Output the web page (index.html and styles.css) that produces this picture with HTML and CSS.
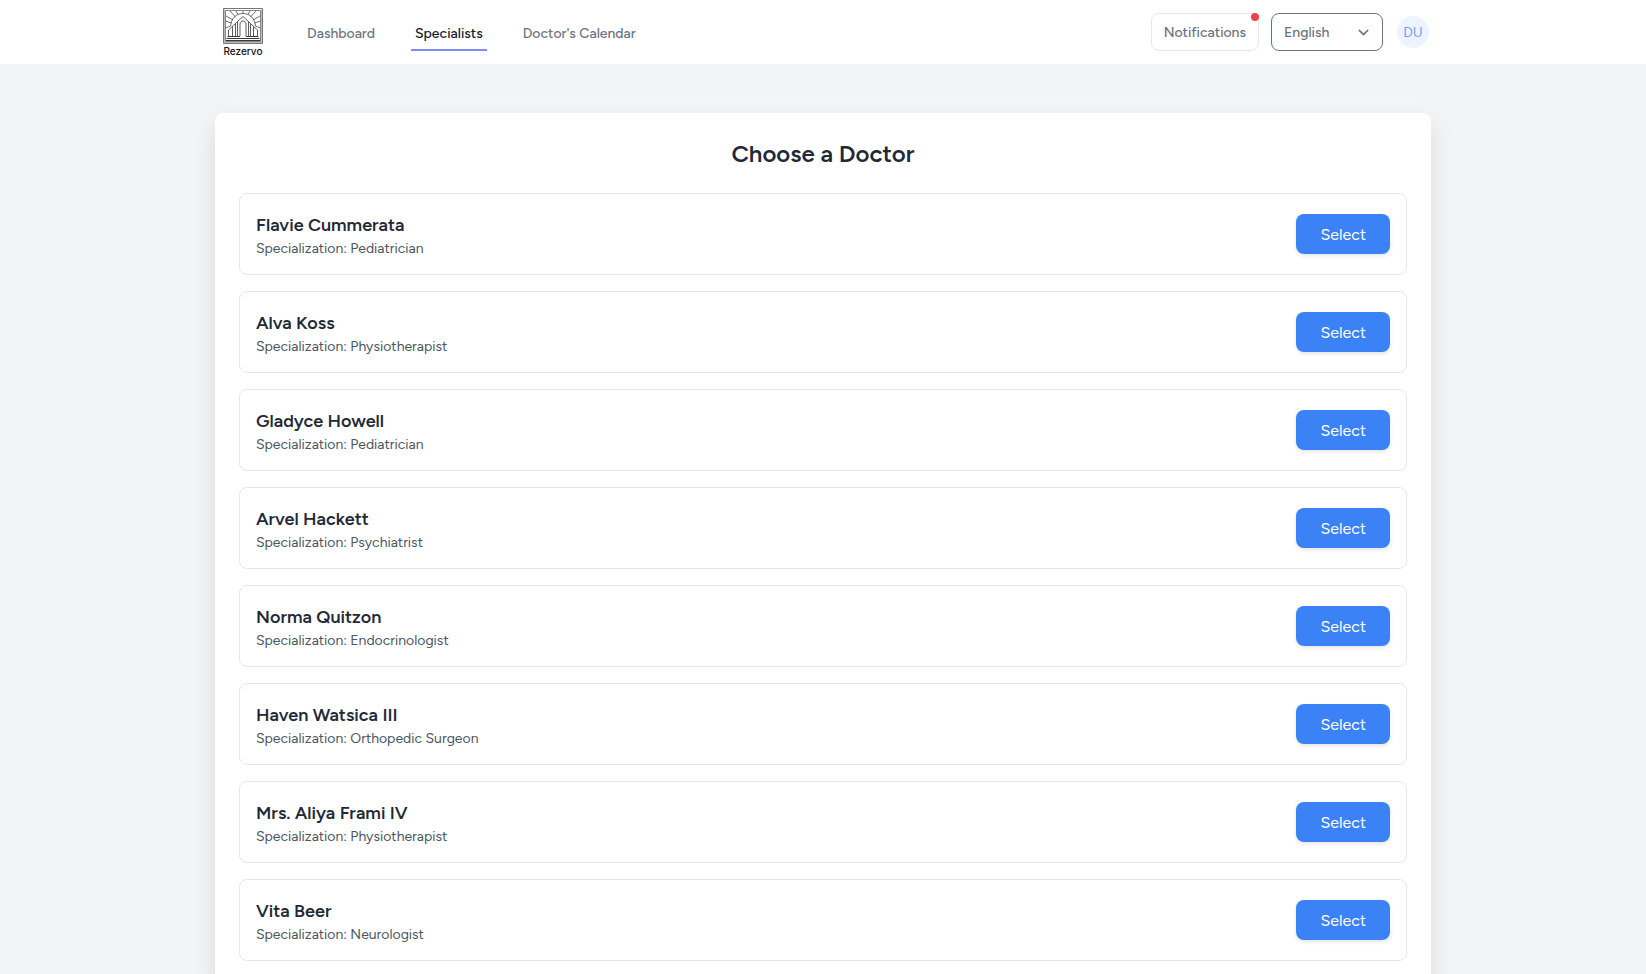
FILE: index.html
```html
<!DOCTYPE html>
<html lang="en">
<head>
<meta charset="utf-8">
<meta name="viewport" content="width=device-width, initial-scale=1">
<title>Rezervo - Specialists</title>
<link rel="stylesheet" href="styles.css">
</head>
<body>
<header class="topbar">
  <div class="container topbar-inner">
    <a class="logo" href="#" aria-label="Rezervo home">
      <svg class="logo-svg" viewBox="0 0 40 48" fill="none" stroke="#333">
        <path stroke="#777" d="M.5.5h39v35H.5z"/>
        <path stroke="#bbb" d="M1 34.500h38M1.500 1.500v33M38.500 1.500v33"/>
        <path stroke="#555" stroke-width=".7" d="M2.500 2.500h35v31h-35z"/>
        <path stroke-width=".7" d="M7.500 18C8.500 10 13 5.500 20 5.500S31.500 10 32.500 18"/>
        <path stroke-width=".8" d="M5.500 28v-6L20 8.500 34.500 22v6M9.500 28v-9.500M12.500 28V16M14.500 28V14M17 28V16c0-4 6-4 6 0v12M25.500 28V14M27.500 28V16M30.500 28v-9.500"/>
        <path stroke-width=".7" d="M2.500 20l5-2M37.500 20l-5-2M2.500 13l6 2M37.500 13l-6 2M3 8l7 4M37 8l-7 4M7 3l5.500 6M33 3l-5.500 6M13 3l2 3.500M27 3l-2 3.500M20 3v2.500"/>
        <path stroke="#222" d="M4.500 28.500h12.500M23 28.500h12.500M3.500 30.500h33M3 32.500h34" stroke-width=".9"/>
        <text class="logo-text" x="20" y="47" text-anchor="middle">Rezervo</text>
      </svg>
    </a>
    <nav class="nav">
      <a class="nav-link" href="#">Dashboard</a>
      <a class="nav-link active" href="#" aria-current="page">Specialists</a>
      <a class="nav-link" href="#">Doctor's Calendar</a>
    </nav>
    <div class="tools">
      <button class="notify" type="button">Notifications<span class="dot"></span></button>
      <div class="lang">
        <select class="lang-select" aria-label="Language"><option>English</option></select>
        <svg class="chevron" viewBox="0 0 20 20" fill="none" stroke="#6b7280" stroke-width="1.5" stroke-linecap="round" stroke-linejoin="round"><path d="M6 8l4 4 4-4"/></svg>
      </div>
      <button class="avatar" type="button">DU</button>
    </div>
  </div>
</header>
<main class="container main">
  <section class="panel">
    <h1 class="title">Choose a Doctor</h1>
    <ul class="doctors">
      <li class="doctor"><div class="info"><h2 class="name">Flavie Cummerata</h2><p class="spec">Specialization: Pediatrician</p></div><button class="select" type="button">Select</button></li>
      <li class="doctor"><div class="info"><h2 class="name">Alva Koss</h2><p class="spec">Specialization: Physiotherapist</p></div><button class="select" type="button">Select</button></li>
      <li class="doctor"><div class="info"><h2 class="name">Gladyce Howell</h2><p class="spec">Specialization: Pediatrician</p></div><button class="select" type="button">Select</button></li>
      <li class="doctor"><div class="info"><h2 class="name">Arvel Hackett</h2><p class="spec">Specialization: Psychiatrist</p></div><button class="select" type="button">Select</button></li>
      <li class="doctor"><div class="info"><h2 class="name">Norma Quitzon</h2><p class="spec">Specialization: Endocrinologist</p></div><button class="select" type="button">Select</button></li>
      <li class="doctor"><div class="info"><h2 class="name">Haven Watsica III</h2><p class="spec">Specialization: Orthopedic Surgeon</p></div><button class="select" type="button">Select</button></li>
      <li class="doctor"><div class="info"><h2 class="name">Mrs. Aliya Frami IV</h2><p class="spec">Specialization: Physiotherapist</p></div><button class="select" type="button">Select</button></li>
      <li class="doctor"><div class="info"><h2 class="name">Vita Beer</h2><p class="spec">Specialization: Neurologist</p></div><button class="select" type="button">Select</button></li>
    </ul>
  </section>
</main>
</body>
</html>
```
FILE: styles.css
```css
* { box-sizing: border-box; }
body {
  margin: 0;
  background: #f3f4f6;
  color: #1f2937;
  font-family: Figtree, Lato, "Open Sans", sans-serif;
  font-size: 16px;
  line-height: 24px;
}
button, select { font: inherit; cursor: pointer; }
.container { max-width: 1280px; margin: 0 auto; padding: 0 32px; }
.topbar { background: #fff; border-bottom: 1px solid #f3f4f6; }
.topbar-inner { display: flex; align-items: center; height: 64px; }
.logo { display: flex; justify-content: center; width: 56px; }
.logo-svg { width: 40px; height: 48px; }
.logo-text { font: 500 10px Inter, "Liberation Sans", sans-serif; fill: #111; stroke: none; }
.nav { display: flex; align-items: center; gap: 32px; margin-left: 32px; }
.nav-link {
  padding: 11px 4px 5px;
  border-bottom: 2px solid transparent;
  color: #6b7280;
  font-size: 14px;
  font-weight: 500;
  line-height: 20px;
  text-decoration: none;
}
.nav-link.active { color: #111827; border-color: #818cf8; }
.tools { display: flex; align-items: center; gap: 12px; margin-left: auto; padding-right: 2px; }
.notify {
  position: relative;
  height: 38px;
  padding: 2px 12px 0;
  border: 1px solid #e5e7eb;
  border-radius: 8px;
  background: #fff;
  color: #6b7280;
  font-size: 14px;
  font-weight: 500;
}
.dot { position: absolute; top: -1px; right: -1px; width: 8px; height: 8px; border-radius: 50%; background: #ef4444; }
.lang { position: relative; }
.lang-select {
  display: block;
  appearance: none;
  width: 112px;
  height: 38px;
  padding: 2px 40px 0 12px;
  border: 1px solid #6b7280;
  border-radius: 8px;
  background: #fff;
  color: #6b7280;
  font-size: 14px;
  font-weight: 500;
}
.chevron { position: absolute; top: 9px; right: 9px; width: 21px; height: 21px; pointer-events: none; }
.avatar {
  width: 32px;
  height: 32px;
  margin-left: 2px;
  padding: 2px 0 0;
  border: 0;
  border-radius: 50%;
  background: #ebf4ff;
  color: #7f9cf5;
  font-size: 14px;
}
.main { padding-top: 48px; padding-bottom: 48px; }
.panel {
  padding: 24px;
  border-radius: 8px;
  background: #fff;
  box-shadow: 0 10px 25px rgb(0 0 0 / 10%);
}
.title { margin: 0 0 23px; padding-top: 1px; font-size: 24px; font-weight: 600; line-height: 32px; text-align: center; }
.doctors { display: grid; gap: 16px; margin: 0; padding: 0; list-style: none; }
.doctor {
  display: flex;
  align-items: center;
  justify-content: space-between;
  padding: 15px 16px;
  border: 1px solid #e5e7eb;
  border-radius: 8px;
}
.info { padding-top: 2px; }
.name { margin: 0; font-size: 18px; font-weight: 600; line-height: 28px; }
.spec { margin: 0; color: #4b5563; font-size: 14px; line-height: 20px; }
.select {
  padding: 9px 24px 7px;
  border: 0;
  border-radius: 8px;
  background: #3b82f6;
  color: #fff;
  box-shadow: 0 2px 4px rgb(0 0 0 / 10%);
}
```
